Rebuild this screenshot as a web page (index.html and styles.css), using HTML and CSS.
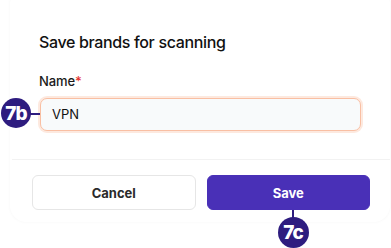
FILE: index.html
```html
<!DOCTYPE html>
<html>
<head>
<meta charset="utf-8">
<link rel="stylesheet" href="styles.css">
</head>
<body>
<div class="card">
  <div class="content">
    <h1 class="title">Save brands for scanning</h1>
    <label class="label">Name<span class="req">*</span></label>
    <div class="field">
      <span class="badge badge-b">7b</span>
      <span class="connector-h"></span>
      <div class="input">VPN</div>
    </div>
  </div>
  <div class="divider"></div>
  <div class="footer">
    <button class="btn btn-cancel">Cancel</button>
    <button class="btn btn-save">Save
      <span class="connector-v"></span>
      <span class="badge badge-c">7c</span>
    </button>
  </div>
</div>
</body>
</html>
```

FILE: styles.css
```css
html, body {
  margin: 0;
  padding: 0;
  background: #ffffff;
  overflow: hidden;
}
body {
  font-family: Inter, "Noto Sans", sans-serif;
  width: 391px;
  height: 248px;
}
.card {
  margin: -12px 1px 0 10px;
  background: #fff;
  border-radius: 16px;
  box-shadow: 0 0 3px rgba(0, 0, 0, 0.045);
}
.content {
  padding: 44px 28px 28px 29px;
}
.title {
  margin: 0;
  font-size: 16px;
  line-height: 20px;
  font-weight: 500;
  color: #111;
  letter-spacing: -0.35px;
}
.label {
  display: block;
  margin-top: 21px;
  margin-bottom: 9px;
  font-size: 13px;
  line-height: 16px;
  font-weight: 500;
  color: #1a1a1a;
  letter-spacing: -0.1px;
}
.req {
  color: #e5322d;
}
.field {
  position: relative;
  margin: 0 1px;
}
.input {
  box-sizing: border-box;
  height: 33px;
  border: 1px solid #f9bfa3;
  border-radius: 7px;
  box-shadow: 0 0 0 2px #fde9df;
  background: #f8fafb;
  padding-left: 11px;
  font-size: 13px;
  line-height: 31px;
  color: #111;
}
.badge {
  position: absolute;
  display: flex;
  align-items: center;
  justify-content: center;
  border-radius: 50%;
  background: #2e1c7f;
  color: #fff;
  font-weight: 800;
  font-size: 19px;
  letter-spacing: -1px;
  z-index: 2;
}
.badge-b {
  width: 30px;
  height: 30px;
  left: -39px;
  top: 0px;
}
.connector-h {
  position: absolute;
  left: -10px;
  top: 15px;
  width: 10px;
  height: 2px;
  background: #2e1c7f;
}
.divider {
  height: 1px;
  background: #f2f2f2;
  margin-left: 2px;
}
.footer {
  display: flex;
  gap: 11px;
  padding: 15px 20px 12px 22px;
}
.btn {
  flex: 1;
  height: 35px;
  border-radius: 6px;
  font-family: Inter, "Noto Sans", sans-serif;
  font-size: 13px;
  font-weight: 700;
  cursor: pointer;
  position: relative;
}
.btn-cancel {
  background: #fff;
  border: 1px solid #e6e6e6;
  color: #2a2a2a;
}
.btn-save {
  background: #4930b7;
  border: 1px solid #4930b7;
  color: #fff;
}
.connector-v {
  position: absolute;
  left: 84px;
  top: 34px;
  width: 2px;
  height: 9px;
  background: #2e1c7f;
}
.badge-c {
  width: 31px;
  height: 31px;
  left: 70px;
  top: 41px;
}
```
